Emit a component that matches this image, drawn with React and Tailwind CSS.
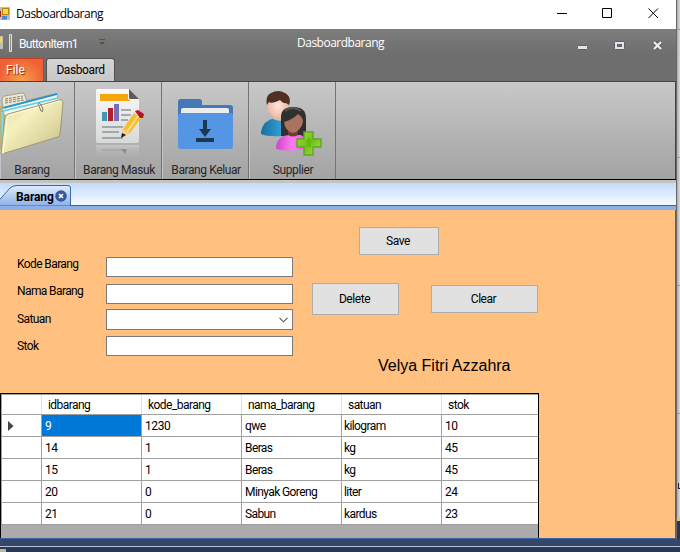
import React from "react";

const rows = [
  ["9", "1230", "qwe", "kilogram", "10"],
  ["14", "1", "Beras", "kg", "45"],
  ["15", "1", "Beras", "kg", "45"],
  ["20", "0", "Minyak Goreng", "liter", "24"],
  ["21", "0", "Sabun", "kardus", "23"],
];

function FormIcon() {
  return (
    <svg className="mt-px h-[13px] w-[10px] shrink-0" viewBox="0 0 10 13">
      <rect width="10" height="13" fill="#bdbdbd" />
      <rect x="0" y="4" width="1" height="6" fill="#b02020" />
      <rect x="2.5" y="1.5" width="6" height="6" fill="#ffd24a" stroke="#b88608" />
      <rect x="2" y="9" width="5" height="3.5" fill="#4b86e0" />
    </svg>
  );
}

function FilesIcon() {
  return (
    <svg className="-ml-[2px] block h-[70px] w-[66px]" viewBox="0 0 66 70">
      <defs>
        <linearGradient id="folder" x1="0" y1="0" x2="1" y2="1">
          <stop offset="0" stopColor="#dad6a0" />
          <stop offset=".35" stopColor="#f6f2bd" />
          <stop offset=".7" stopColor="#ddd6a0" />
          <stop offset="1" stopColor="#bdb57a" />
        </linearGradient>
      </defs>
      <path d="M2 18 58 5 60 8 60 20 4 66 2 60Z" fill="#b9b283" />
      <path d="M4 12Q4 8 7 8L24 5Q27 5 27 8L29 14 5 20Z" fill="#ece9d2" stroke="#8f8b6e" strokeWidth=".7" />
      <path d="M7 11 25 8M7 13 25 10M7 15 26 12" stroke="#85836f" strokeWidth="1" strokeDasharray="3 1" />
      <path d="M5 19 59 5 60 11 8 24Z" fill="#2c8fd0" />
      <path d="M5 21 59 7 60 12 7 27Z" fill="#eef6f5" />
      <path d="M5 23 60 10" stroke="#54d4dc" strokeWidth="1.5" />
      <path d="M4 24 5 66" stroke="#7fdde0" strokeWidth="1.5" />
      <path d="M7 30Q7 27 10 26L61 12Q65 11 65 15L62 46Q62 48 60 49L7 65 3 66Z" fill="url(#folder)" stroke="#938c5e" strokeWidth=".8" />
      <path d="M5 66 9 31Q9 28 12 27L62 13" fill="none" stroke="#fffbe0" strokeWidth="1" />
      <path d="M41 18 43 23Q45 25 45 21L43 17Q41 13 40 17" fill="none" stroke="#777" strokeWidth="1" />
    </svg>
  );
}

function ReportIcon() {
  return (
    <svg className="ml-[4px] block h-[70px] w-[52px]" viewBox="0 0 52 70">
      <defs>
        <linearGradient id="paper" x1="0" y1="0" x2="0" y2="1">
          <stop offset="0" stopColor="#fafafa" />
          <stop offset="1" stopColor="#d9d9d9" />
        </linearGradient>
        <linearGradient id="mirror" x1="0" y1="0" x2="0" y2="1">
          <stop offset="0" stopColor="#e2e2e2" stopOpacity=".45" />
          <stop offset="1" stopColor="#bbb" stopOpacity="0" />
        </linearGradient>
      </defs>
      <path d="M3 1H35L45 11V53Q45 55 43 55H4Q2 55 2 53V2Z" fill="url(#paper)" />
      <path d="M35 1 45 11H36Q35 11 35 9Z" fill="#5b5b5b" />
      <path d="M6 6H34V11L37 13H6Z" fill="#f5a60a" />
      <rect x="8" y="24" width="5" height="9" fill="#3c9ab8" />
      <rect x="14" y="20" width="5" height="13" fill="#b51f2a" />
      <rect x="20" y="16" width="5" height="17" fill="#7770b6" />
      <path d="M27 22H37M27 27H37M27 32H34M8 39H29M8 44H25M8 50H29" stroke="#87999e" strokeWidth="1.6" />
      <path d="M27 50 29 41 40 25 47 30 36 45Z" fill="#f7bd31" />
      <path d="M33 44 44 28" stroke="#ffe27a" strokeWidth="2" />
      <path d="M29 41 36 45 27 50Z" fill="#f3cd91" />
      <path d="M28 45 32 47 27 50Z" fill="#222" />
      <path d="M40 25 42 22 49 27 47 30Z" fill="#ddd" />
      <path d="M41 23 44 22 50 26 49 30 46 30Z" fill="#b51622" />
      <path d="M2 57H45V69H2Z" fill="url(#mirror)" />
      <path d="M8 62H29" stroke="#a5a5a5" strokeWidth="1.5" />
      <path d="M27 61H33L31 66Z" fill="#8c8c8c" />
    </svg>
  );
}

function DownloadIcon() {
  return (
    <svg className="block h-[52px] w-[56px]" viewBox="0 0 56 52">
      <path d="M1 3Q1 0 4 0H22Q25 0 25 3V6H53Q56 6 56 9V24H1Z" fill="#4677b7" />
      <path d="M4 11Q4 9 6 9H50Q52 9 52 11V18H4Z" fill="#ececec" />
      <path d="M1 17Q1 14 4 14H53Q56 14 56 17V47Q56 50 53 50H4Q1 50 1 47Z" fill="#5496e4" />
      <path d="M26 21H30V30H34L28 38 22 30H26ZM19 39H37V43H19Z" fill="#1b3752" />
    </svg>
  );
}

function PeopleIcon() {
  return (
    <svg className="block h-[66px] w-[62px]" viewBox="0 0 62 66">
      <defs>
        <radialGradient id="face">
          <stop offset="0" stopColor="#ffe7dc" />
          <stop offset="1" stopColor="#efb9a2" />
        </radialGradient>
        <linearGradient id="shirt">
          <stop offset="0" stopColor="#176f9d" />
          <stop offset="1" stopColor="#35a7df" />
        </linearGradient>
        <linearGradient id="pink">
          <stop offset="0" stopColor="#cf45c9" />
          <stop offset=".5" stopColor="#ff7cf2" />
          <stop offset="1" stopColor="#e74edb" />
        </linearGradient>
        <linearGradient id="plus" x1="0" y1="0" x2="1" y2="1">
          <stop offset="0" stopColor="#9ce43a" />
          <stop offset=".5" stopColor="#72bf18" />
          <stop offset="1" stopColor="#a5e64b" />
        </linearGradient>
      </defs>
      <path d="M0 41Q2 29 14 27L24 27V45Q6 46 0 43Z" fill="url(#shirt)" />
      <path d="M13 23H23V29Q18 31 12 28Z" fill="#edb39c" />
      <ellipse cx="17" cy="15" rx="10.500" ry="12" fill="url(#face)" />
      <path d="M6 14Q4 5 10 2Q17-2 24 2Q31 6 28 14L25 12Q22 13 19 9Q11 13 8 11Z" fill="#522f23" />
      <path d="M20 45V26Q20 16 32 16Q45 16 45 27V46Z" fill="#303030" />
      <path d="M24 20Q31 14 40 20" fill="none" stroke="#555" strokeWidth="2" />
      <path d="M15 58Q15 45 28 44L40 44Q48 48 48 57Q29 62 15 58Z" fill="url(#pink)" />
      <path d="M27 38H37V44Q32 47 27 44Z" fill="#703b30" />
      <path d="M23 31Q31 29 37 23Q42 26 42 31Q40 40 32 42Q24 40 23 31Z" fill="#aa7360" />
      <path d="M43 41H52V48H60V56H52V64H43V56H36V48H43Z" fill="url(#plus)" stroke="#62a622" strokeWidth="1.4" />
      <path d="M48 46 52 51H50V56H46V51H44Z" fill="#61bd10" />
    </svg>
  );
}

function RibbonItem({ label, width, children }) {
  return (
    <div className={`flex h-full shrink-0 flex-col items-center border-r border-[#747474] shadow-[inset_1px_0_#c4c4c4] ${width}`}>
      <div className="flex h-[81px] w-full shrink-0 justify-center">{children}</div>
      <span className="pl-[2px] text-[12px] leading-[15px] tracking-[-0.4px] whitespace-nowrap text-[#262626]">{label}</span>
    </div>
  );
}

function Field({ label, className, labelClass = "-mt-px", select }) {
  return (
    <div className={`flex ${className}`}>
      <span className={`w-[89px] shrink-0 text-[12px] leading-[16px] tracking-[-0.6px] ${labelClass}`}>{label}</span>
      <div className={`flex w-[187px] items-center justify-end border border-[#7a7a7a] bg-white ${select ? "h-[21px]" : "h-[20px]"}`}>
        {select && (
          <svg className="mr-[4px] h-[6px] w-[9px]" viewBox="0 0 9 6" fill="none" stroke="#555" strokeWidth="1.1">
            <path d="M.5.8 4.5 4.8 8.5.8" />
          </svg>
        )}
      </div>
    </div>
  );
}

function Button({ children, className }) {
  return (
    <button className={`shrink-0 border border-[#adadad] bg-[#e1e1e1] pr-[2px] text-[12px] leading-[16px] tracking-[-0.45px] ${className}`}>
      {children}
    </button>
  );
}

function DataGrid() {
  const cell = "w-[100px] shrink-0 border-r border-[#a0a0a0] whitespace-nowrap";
  return (
    <div className="flex h-[145px] w-[539px] shrink-0 flex-col overflow-hidden border-t border-r border-l border-black bg-[#ababab] text-[12px] leading-[16px]">
      <div className="flex h-[21px] w-full shrink-0 overflow-hidden border-t border-b border-[#a0a0a0] bg-white">
        <div className="w-[41px] shrink-0 border-r border-l border-[#e0e0e0] border-l-[#a0a0a0]" />
        {["idbarang", "kode_barang", "nama_barang", "satuan", "stok"].map((h) => (
          <div key={h} className="w-[100px] shrink-0 border-r border-[#e0e0e0] pt-[2px] pl-[6px] tracking-[-0.55px]">{h}</div>
        ))}
      </div>
      {rows.map((row, r) => (
        <div key={row[0]} className="flex h-[22px] w-full shrink-0 overflow-hidden border-b border-[#a0a0a0] bg-white">
          <div className="flex w-[41px] shrink-0 items-center border-r border-l border-[#a0a0a0] pl-[6px]">
            {r === 0 && (
              <svg className="h-[10px] w-[6px]" viewBox="0 0 6 10">
                <path d="M0 0 5.5 5 0 10Z" fill="#444" />
              </svg>
            )}
          </div>
          {row.map((value, c) => (
            <div key={c} className={`${cell} pt-[3px] ${c === 3 ? "pl-[2px]" : "pl-[3px]"} ${c === 2 || c === 3 ? "tracking-[-0.6px]" : "tracking-[-0.4px]"} ${r === 0 && c === 0 ? "bg-[#0078d7] text-white" : ""}`}>{value}</div>
          ))}
        </div>
      ))}
    </div>
  );
}

export default function App() {
  return (
    <div className="flex h-[552px] w-[680px] flex-col overflow-hidden bg-[#2b3b59] font-[Roboto,'Liberation_Sans',sans-serif] text-black">
      <div className="flex h-[539px] shrink-0">
        <div className="flex w-[677px] shrink-0 flex-col border-r border-[#686868]">
          <header className="flex h-[29px] shrink-0 items-start bg-white pt-[6px]">
            <FormIcon />
            <span className="ml-[6px] font-['Open_Sans',sans-serif] text-[12px] leading-[16px] tracking-[-0.5px]">Dasboardbarang</span>
            <svg className="mt-[1px] mr-[17px] ml-auto h-[12px] w-[102px]" viewBox="0 0 102 12" fill="none" stroke="#000">
              <path d="M0 6.5H10M45.5 1.5H54.5V10.5H45.5ZM91.5 1.5 101 11M101 1.5 91.5 11" />
            </svg>
          </header>

          <div className="flex h-[52px] shrink-0 flex-col bg-linear-to-b from-[#7d7d7d] to-[#6e6e6e] to-50%">
            <div className="flex h-[29px] shrink-0 items-start text-[12px] leading-[16px] text-white">
              <svg className="mt-[5px] h-[18px] w-[13px] shrink-0" viewBox="0 0 13 18">
                <rect y="2" width="3" height="13" fill="#bdbdbd" />
                <rect y="3" width="2" height="6" fill="#ffd24a" />
                <path d="M9.5.5H11.5V17.5H9.5Z" fill="#8a8a8a" stroke="#e2e2e2" />
              </svg>
              <span className="mt-[7px] ml-[6px] w-[80px] tracking-[-0.65px]">ButtonItem1</span>
              <svg className="mt-[10px] h-[7px] w-[6px]" viewBox="0 0 6 7" fill="#5c5238">
                <path d="M0 0H6V1H0ZM0 3H6L3 6Z" />
              </svg>
              <span className="mt-[6px] ml-[192px] font-['Open_Sans',sans-serif] tracking-[-0.5px]">Dasboardbarang</span>
              <svg className="mt-[11px] mr-[12px] ml-auto h-[11px] w-[87px]" viewBox="0 0 87 11">
                <rect x=".5" y="5.5" width="10" height="4" rx="1" fill="#e4e4e4" stroke="#5b5d70" />
                <rect x="37.5" y="1.5" width="10" height="8" rx="1" fill="#e4e4e4" stroke="#5b5d70" />
                <rect x="40.5" y="4.5" width="4" height="2" fill="#777" stroke="#5b5d70" />
                <path d="M77 2 84 9M84 2 77 9" stroke="#5b5d70" strokeWidth="4" />
                <path d="M77 2 84 9M84 2 77 9" stroke="#eee" strokeWidth="2.2" />
              </svg>
            </div>
            <div className="flex h-[23px] items-end text-[12px] leading-[23px]">
              <div className="h-[23px] w-[44px] rounded-tr-[2px] border-t border-r border-[#c43e1c] bg-[radial-gradient(ellipse_at_bottom,#f9a04a,#ee6238_75%)] pl-[6px] text-white [text-shadow:1px_1px_1px_#8b2814]">File</div>
              <div className="ml-[2px] h-[23px] w-[69px] rounded-t-[3px] border-x border-t border-[#505050] bg-linear-to-b from-[#d5d5d5] to-[#c8c8c8] text-center tracking-[-0.4px]">Dasboard</div>
            </div>
          </div>

          <div className="flex h-[98px] shrink-0 border-t border-r border-[#444] bg-linear-to-b from-[#c8c8c8] to-[#a3a3a3]">
            <RibbonItem label="Barang" width="w-[75px] pr-[12px]"><div className="w-full pt-[6px]"><FilesIcon /></div></RibbonItem>
            <RibbonItem label="Barang Masuk" width="w-[87px]"><div className="pt-[6px]"><ReportIcon /></div></RibbonItem>
            <RibbonItem label="Barang Keluar" width="w-[87px]"><div className="pt-[17px]"><DownloadIcon /></div></RibbonItem>
            <RibbonItem label="Supplier" width="w-[87px]"><div className="pt-[9px]"><PeopleIcon /></div></RibbonItem>
          </div>

          <div className="h-[4px] shrink-0 border-t border-black bg-[#c3c4be]" />
          <div className="h-[22px] shrink-0 bg-linear-to-b from-[#c4dafa] to-[#f6faff]">
            <div className="relative h-[23px] w-[72px]">
              <svg className="absolute inset-0 h-[23px] w-[72px]" viewBox="0 0 72 23">
                <defs>
                  <linearGradient id="tab" x1="0" y1="0" x2="0" y2="1">
                    <stop offset="0" stopColor="#e2edfc" />
                    <stop offset="1" stopColor="#8db0e8" />
                  </linearGradient>
                </defs>
                <path d="M-6 23 10 5Q13 2.500 17 2.500H68Q70.500 2.500 70.500 5V23Z" fill="url(#tab)" stroke="#3966a7" />
                <circle cx="61" cy="13" r="5.800" fill="#34579d" />
                <path d="M59 11 63 15M63 11 59 15" stroke="white" strokeWidth="1.600" />
              </svg>
              <span className="absolute top-[6px] left-[16px] text-[12px] leading-[16px] font-bold tracking-[-0.1px]">Barang</span>
            </div>
          </div>
          <div className="flex h-[5px] shrink-0">
            <div className="w-[71px] bg-[#8db0e8]" />
            <div className="flex-1 border-t border-[#3c64a4] bg-[#8db0e8]" />
          </div>

          <main className="flex h-[329px] shrink-0 flex-col border-r border-b border-[#3d65a2] bg-[#ffc080]">
            <div className="flex h-[183px] shrink-0">
              <div className="w-[293px] shrink-0 pt-[47px] pl-[17px]">
                <Field label="Kode Barang" className="h-[27px]" />
                <Field label="Nama Barang" className="h-[25px]" />
                <Field label="Satuan" className="h-[27px]" labelClass="mt-[2px]" select />
                <Field label="Stok" className="h-[20px]" labelClass="mt-[2px]" />
              </div>
              <div className="flex flex-col pt-[17px] pl-[19px]">
                <Button className="ml-[47px] h-[28px] w-[80px]">Save</Button>
                <div className="mt-[28px] flex h-[32px] items-center gap-[32px]">
                  <Button className="h-[32px] w-[87px]">Delete</Button>
                  <Button className="h-[28px] w-[107px]">Clear</Button>
                </div>
                <span className="mt-[41px] ml-[66px] font-['Liberation_Sans',sans-serif] text-[16px] leading-[20px] whitespace-nowrap">Velya Fitri Azzahra</span>
              </div>
            </div>
            <DataGrid />
          </main>
        </div>
        <aside className="flex w-[3px] flex-col bg-linear-to-r from-[#aaa] to-[#ddd]">
          <div className="h-[30px] border-b border-[#999]" />
          <div className="h-[128px] border-b border-[#999]" />
          <div className="h-[128px] border-b border-[#999]" />
          <div className="h-[128px] border-b border-[#999]" />
          <div className="mt-[69px] ml-[1px] h-[6px] w-[2px] border-b border-l border-[#35103f]" />
          <div className="mt-[28px] h-[4px] bg-[#d6c47e]" />
          <div className="flex-1 bg-[#263751]" />
        </aside>
      </div>
      <footer className="flex h-[13px] shrink-0 flex-col">
        <div className="h-[7px] bg-[#34466a]" />
        <div className="h-[1px] bg-[#b8c1ce]" />
        <div className="h-[5px] bg-[#293956] bg-[radial-gradient(#3c4b67_0.7px,transparent_0.7px)] bg-size-[4px_4px] pt-[2px]">
          <div className="h-[3px] w-[6px] bg-[#bdb79d]" />
        </div>
      </footer>
    </div>
  );
}
